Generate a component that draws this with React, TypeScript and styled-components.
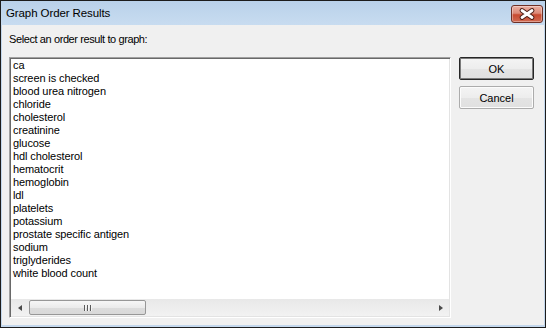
import React from "react";
import styled, { createGlobalStyle } from "styled-components";

const GlobalStyle = createGlobalStyle`
  html, body {
    margin: 0;
    padding: 0;
    background: #f0f0f0;
  }
  body {
    font-family: "Liberation Sans", Arial, sans-serif;
  }
`;

const ORDER_RESULTS = [
  "ca",
  "screen is checked",
  "blood urea nitrogen",
  "chloride",
  "cholesterol",
  "creatinine",
  "glucose",
  "hdl cholesterol",
  "hematocrit",
  "hemoglobin",
  "ldl",
  "platelets",
  "potassium",
  "prostate specific antigen",
  "sodium",
  "triglyderides",
  "white blood count",
];

const CloseGlyph = () => (
  <svg width="30" height="16" viewBox="0 0 30 16">
    <path d="M10 4.5 L20 11.5 M20 4.5 L10 11.5" stroke="#4a1e16" strokeWidth="4.8" strokeLinecap="round" />
    <path d="M10 4.5 L20 11.5 M20 4.5 L10 11.5" stroke="#ffffff" strokeWidth="2.8" strokeLinecap="round" />
  </svg>
);

const App = (): React.ReactNode => {
  return (
    <>
      <GlobalStyle />
      <Window>
        <TitleBar>
          <Title>Graph Order Results</Title>
          <CloseButton aria-label="Close">
            <CloseGlyph />
          </CloseButton>
        </TitleBar>
        <Client>
          <Prompt>Select an order result to graph:</Prompt>
          <Body>
            <ListBox>
              <Items>
                {ORDER_RESULTS.map(result => (
                  <Item key={result}>{result}</Item>
                ))}
              </Items>
              <HScroll>
                <ArrowButton>
                  <Arrow $dir="left" />
                </ArrowButton>
                <Track>
                  <Thumb>
                    <GripLine />
                    <GripLine />
                    <GripLine />
                  </Thumb>
                </Track>
                <ArrowButton>
                  <Arrow $dir="right" />
                </ArrowButton>
              </HScroll>
            </ListBox>
            <ButtonColumn>
              <DialogButton $isDefault>OK</DialogButton>
              <DialogButton>Cancel</DialogButton>
            </ButtonColumn>
          </Body>
        </Client>
      </Window>
    </>
  );
};

const Window = styled.div`
  box-sizing: border-box;
  display: flex;
  flex-direction: column;
  width: 546px;
  height: 328px;
  border: 1px solid #1c1c1c;
  background: #c3d7ec;
`;
const TitleBar = styled.div`
  display: flex;
  align-items: center;
  justify-content: space-between;
  flex-shrink: 0;
  height: 24px;
  padding: 0 2px 0 5px;
  background: linear-gradient(to bottom, #b9d1ea, #c8dcf0);
`;
const Title = styled.span`
  font-size: 11.5px;
  letter-spacing: -0.1px;
  color: #000;
`;
const CloseButton = styled.div`
  box-sizing: border-box;
  display: flex;
  width: 32px;
  height: 18px;
  margin-top: 1px;
  border: 1px solid #6e3026;
  border-radius: 3px;
  background: linear-gradient(to bottom, #eab0a3 0%, #dc8a78 45%, #c84a30 55%, #d06a52 100%);
  box-shadow: inset 0 0 0 1px rgba(255, 255, 255, 0.35);
`;
const Client = styled.div`
  display: flex;
  flex-direction: column;
  flex: 1;
  margin: 0 1px 2px 1px;
  padding: 8px 10px 7px 7px;
  background: #f0f0f0;
`;
const Prompt = styled.div`
  font-size: 11px;
  line-height: 13px;
  letter-spacing: -0.4px;
  margin-bottom: 11px;
  color: #000;
`;
const Body = styled.div`
  display: flex;
  gap: 8px;
  flex: 1;
  min-height: 0;
`;
const ListBox = styled.div`
  display: flex;
  flex-direction: column;
  flex: 1;
  padding: 1px;
  border: 1px solid;
  border-color: #a0a0a0 #ffffff #ffffff #a0a0a0;
  box-shadow: inset 1px 1px 0 #696969, inset -1px -1px 0 #e3e3e3;
  background: #fff;
`;
const Items = styled.ul`
  flex: 1;
  overflow: hidden;
  margin: 0;
  padding: 0 2px;
  list-style: none;
`;
const Item = styled.li`
  font-size: 11px;
  line-height: 13px;
  letter-spacing: -0.1px;
  color: #000;
  white-space: nowrap;
`;
const HScroll = styled.div`
  display: flex;
  height: 17px;
  background: linear-gradient(to bottom, #e8e8e8, #f2f2f2);
`;
const ArrowButton = styled.div`
  display: flex;
  align-items: center;
  justify-content: center;
  width: 17px;
`;
const Arrow = styled.span<{ $dir: "left" | "right" }>`
  width: 0;
  height: 0;
  border-top: 3.5px solid transparent;
  border-bottom: 3.5px solid transparent;
  ${({ $dir }) =>
    $dir === "left" ? "border-right: 4px solid #4a4a4a;" : "border-left: 4px solid #4a4a4a;"}
`;
const Track = styled.div`
  display: flex;
  align-items: center;
  flex: 1;
`;
const Thumb = styled.div`
  box-sizing: border-box;
  display: flex;
  align-items: center;
  justify-content: center;
  gap: 1px;
  width: 117px;
  height: 15px;
  margin-left: 1px;
  border: 1px solid #979797;
  border-radius: 2px;
  background: linear-gradient(to bottom, #f6f6f6 0%, #ebebeb 50%, #dcdcdc 51%, #d9d9d9 100%);
`;
const GripLine = styled.span`
  width: 1px;
  height: 6px;
  background: #5a5a5a;
  border-right: 1px solid #f4f4f4;
`;
const ButtonColumn = styled.div`
  display: flex;
  flex-direction: column;
  gap: 6px;
  width: 75px;
`;
const DialogButton = styled.button<{ $isDefault?: boolean }>`
  box-sizing: border-box;
  width: 75px;
  height: 23px;
  padding: 0;
  border: 1px solid ${({ $isDefault }) => ($isDefault ? "#262626" : "#acacac")};
  border-radius: 2px;
  box-shadow: inset 0 0 0 1px ${({ $isDefault }) => ($isDefault ? "#7a7a7a" : "#fcfcfc")};
  background: linear-gradient(to bottom, #f4f4f4 0%, #ededed 50%, #e4e4e4 51%, #e0e0e0 100%);
  font-family: "Liberation Sans", Arial, sans-serif;
  font-size: 11px;
  color: #000;
`;

export default App;
